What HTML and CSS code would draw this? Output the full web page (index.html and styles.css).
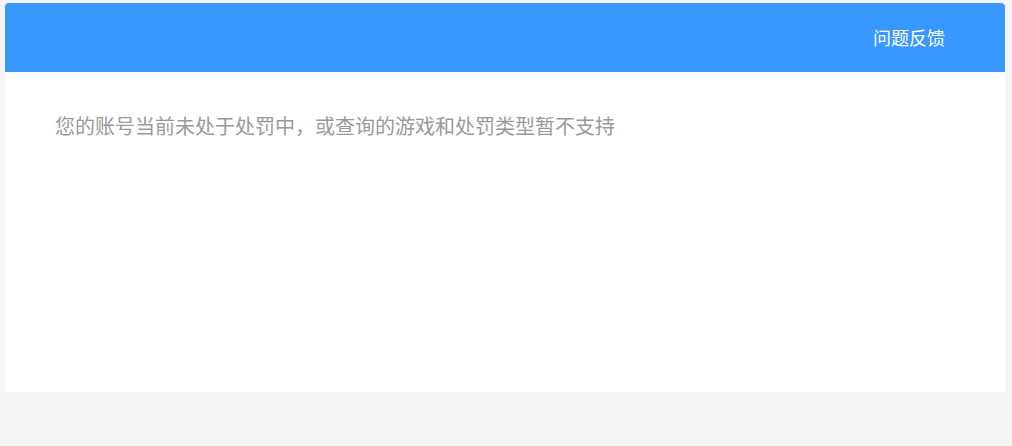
FILE: index.html
```html
<!DOCTYPE html>
<html lang="zh-CN">
<head>
<meta charset="utf-8">
<title>处罚查询</title>
<link rel="stylesheet" href="styles.css">
</head>
<body>
<div class="card">
  <header class="card-header">
    <a class="feedback" href="#">问题反馈</a>
  </header>
  <main class="card-body">
    <p class="notice">您的账号当前未处于处罚中，或查询的游戏和处罚类型暂不支持</p>
  </main>
</div>
</body>
</html>
```
FILE: styles.css
```css
html, body {
  margin: 0;
  padding: 0;
  background: #f4f4f4;
  font-family: "Noto Sans CJK SC", "Noto Sans", sans-serif;
}
body {
  padding: 3px 7px 0 5px;
}
.card {
  width: 1000px;
  background: #fff;
}
.card-header {
  height: 69px;
  background: #3898ff;
  border-radius: 4px 4px 0 0;
  display: flex;
  align-items: center;
  justify-content: flex-end;
  padding: 0 60px 2px 0;
  box-sizing: border-box;
}
.feedback {
  color: #fff;
  font-size: 18px;
  line-height: 24px;
  text-decoration: none;
}
.card-body {
  height: 320px;
  box-sizing: border-box;
  padding: 42px 50px 0;
}
.notice {
  margin: 0;
  color: #999;
  font-size: 20px;
  line-height: 24px;
}
```
